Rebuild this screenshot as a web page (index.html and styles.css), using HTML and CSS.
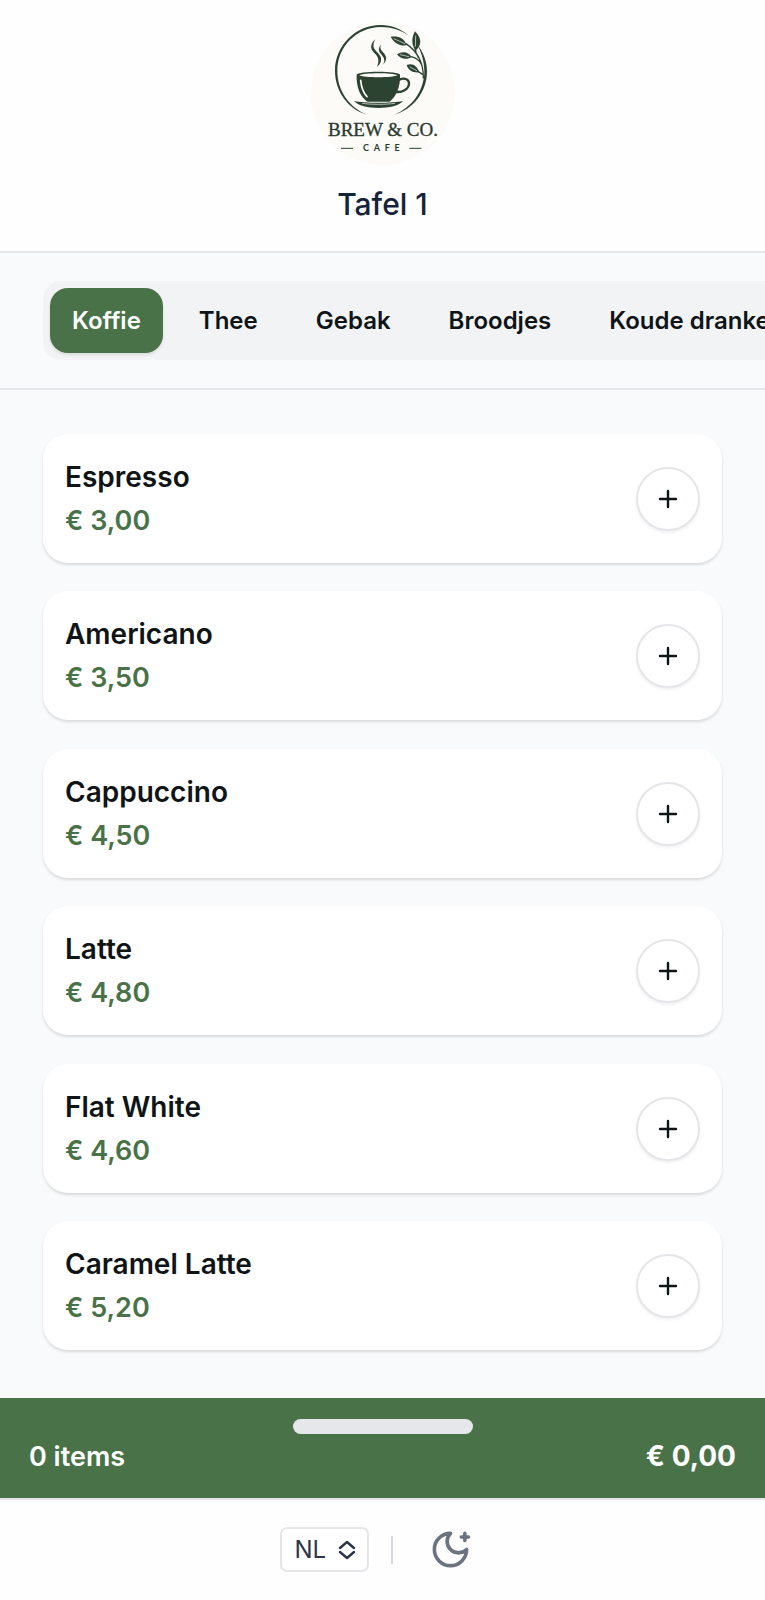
FILE: index.html
```html
<!DOCTYPE html>
<html lang="nl">
<head>
<meta charset="utf-8">
<meta name="viewport" content="width=device-width, initial-scale=1">
<title>Brew &amp; Co. – Tafel 1</title>
<link rel="stylesheet" href="styles.css">
</head>
<body>
<div class="page">
  <header class="header">
    <svg class="logo" viewBox="33 33 432 432" role="img" aria-label="Brew &amp; Co. Cafe">
      <circle cx="249" cy="249" r="216" fill="#fcfbf7"/>
      <g fill="#2b4330">
        <path d="M200 314C145 297 105 245 105 182C105 107 167 45 242 45C274 45 303 57 327 77C303 60 274 51 242 51C171 51 112 109 112 182C112 243 148 291 200 314Z"/>
        <path d="M353 105C370 127 381 155 381 184C381 247 338 299 283 314C334 294 373 244 373 184C373 156 365 130 353 105Z"/>
        <path d="M272 80C294 77 313 83 320 106C299 109 282 98 272 80Z"/>
        <path d="M345 64C367 87 365 107 346 122C334 102 334 85 345 64Z"/>
        <path d="M291 133C309 122 325 126 335 141C318 151 301 147 291 133Z"/>
        <path d="M320 165C338 158 351 167 358 187C339 189 325 182 320 165Z"/>
        <path d="M226 88C205 107 214 121 227 133C237 144 237 156 231 171C252 151 243 137 230 125C219 115 217 105 226 88Z"/>
        <path d="M243 103C232 118 237 127 247 137C255 146 254 155 249 164C264 149 259 137 249 127C241 119 239 113 243 103Z"/>
        <path fill-rule="evenodd" d="M170 194C172 182 298 182 300 194C302 235 286 261 269 275H202C183 261 168 235 170 194ZM178 196C190 204 280 204 292 196C280 188 190 188 178 196Z"/>
        <path d="M162 273C195 280 275 280 309 273C289 300 184 301 162 273Z"/>
      </g>
      <g fill="none" stroke="#2b4330" stroke-linecap="round">
        <path stroke-width="7" d="M298 209C315 202 328 208 327 222C326 237 308 247 291 246"/>
        <path stroke-width="4" d="M318 101C350 123 371 153 370 204M346 116C346 126 350 134 355 142M332 140C348 143 359 151 365 164M354 184L369 194"/>
        <path stroke-width="3" d="M124 415H158M329 415H363"/>
      </g>
      <g fill="none" stroke="#fcfbf7" stroke-linecap="round">
        <path stroke-width="5" d="M182 211C184 233 190 248 201 260"/>
        <path stroke-width="2" d="M282 86L314 101M347 78L346 109M301 134L326 140M330 171L350 182M188 280C210 284 260 284 284 280"/>
      </g>
      <text class="logo-name" x="249" y="379">BREW &amp; CO.</text>
      <text class="logo-sub" x="251" y="424">CAFE</text>
    </svg>
    <h1 class="table-name">Tafel 1</h1>
  </header>

  <nav class="categories" aria-label="Categorieën">
    <div class="tabs" role="tablist">
      <button class="tab tab-active" type="button" role="tab" aria-selected="true">Koffie</button>
      <button class="tab" type="button" role="tab" aria-selected="false">Thee</button>
      <button class="tab" type="button" role="tab" aria-selected="false">Gebak</button>
      <button class="tab" type="button" role="tab" aria-selected="false">Broodjes</button>
      <button class="tab" type="button" role="tab" aria-selected="false">Koude dranken</button>
    </div>
  </nav>

  <main class="menu">
    <article class="card">
      <div><h2 class="name">Espresso</h2><p class="price">€ 3,00</p></div>
      <button class="add" type="button" aria-label="Espresso toevoegen"><svg class="plus" viewBox="0 0 20 20"><path d="M10 2V18M2 10H18"/></svg></button>
    </article>
    <article class="card">
      <div><h2 class="name">Americano</h2><p class="price">€ 3,50</p></div>
      <button class="add" type="button" aria-label="Americano toevoegen"><svg class="plus" viewBox="0 0 20 20"><path d="M10 2V18M2 10H18"/></svg></button>
    </article>
    <article class="card">
      <div><h2 class="name">Cappuccino</h2><p class="price">€ 4,50</p></div>
      <button class="add" type="button" aria-label="Cappuccino toevoegen"><svg class="plus" viewBox="0 0 20 20"><path d="M10 2V18M2 10H18"/></svg></button>
    </article>
    <article class="card">
      <div><h2 class="name">Latte</h2><p class="price">€ 4,80</p></div>
      <button class="add" type="button" aria-label="Latte toevoegen"><svg class="plus" viewBox="0 0 20 20"><path d="M10 2V18M2 10H18"/></svg></button>
    </article>
    <article class="card">
      <div><h2 class="name">Flat White</h2><p class="price">€ 4,60</p></div>
      <button class="add" type="button" aria-label="Flat White toevoegen"><svg class="plus" viewBox="0 0 20 20"><path d="M10 2V18M2 10H18"/></svg></button>
    </article>
    <article class="card">
      <div><h2 class="name">Caramel Latte</h2><p class="price">€ 5,20</p></div>
      <button class="add" type="button" aria-label="Caramel Latte toevoegen"><svg class="plus" viewBox="0 0 20 20"><path d="M10 2V18M2 10H18"/></svg></button>
    </article>
  </main>

  <section class="cart" aria-label="Winkelwagen">
    <div class="handle"></div>
    <div class="cart-row">
      <span class="cart-count">0 items</span>
      <span class="cart-total">€ 0,00</span>
    </div>
  </section>

  <footer class="footer">
    <div class="language">
      <select class="language-select" aria-label="Taal"><option>NL</option><option>EN</option></select>
      <svg class="language-icon" viewBox="0 0 18 20" aria-hidden="true"><path d="M2 8L9 2L16 8M2 12L9 18L16 12"/></svg>
    </div>
    <span class="divider"></span>
    <button class="theme" type="button" aria-label="Donker thema">
      <svg class="moon" viewBox="0 0 24 24"><path d="M12 3a6 6 0 0 0 9 9 9 9 0 1 1-9-9M20 3v4M22 5h-4"/></svg>
    </button>
  </footer>
</div>
</body>
</html>
```
FILE: styles.css
```css
* {
  box-sizing: border-box;
}

body {
  margin: 0;
  font-family: Inter, "Liberation Sans", sans-serif;
  color: #0f1416;
  background: #f9fafc;
}

button,
select {
  font: inherit;
  color: inherit;
}

h1, h2, p {
  margin: 0;
}

.page {
  display: flex;
  flex-direction: column;
  min-height: 100vh;
}

.header {
  display: flex;
  flex-direction: column;
  align-items: center;
  gap: 19px;
  padding: 21px 28px 27px;
  background: #fefefe;
  border-bottom: 2px solid #e5e6e9;
}

.logo {
  width: 144px;
  height: 144px;
}

.logo-name {
  font: 57px "Liberation Serif", serif;
  fill: #2b3a30;
  stroke: #2b3a30;
  stroke-width: 1px;
  text-anchor: middle;
}

.logo-sub {
  font: 700 27px Lato, sans-serif;
  letter-spacing: 14px;
  fill: #2b3a30;
  text-anchor: middle;
}

.table-name {
  font-size: 30px;
  font-weight: 500;
  line-height: 40px;
  color: #14233a;
}

.categories {
  padding: 28px 0 28px 43px;
  overflow-x: auto;
  scrollbar-width: none;
  border-bottom: 2px solid #e5e6e9;
}

.tabs {
  display: flex;
  gap: 14px;
  width: max-content;
  padding: 7px;
  background: #f2f3f5;
  border-radius: 18px;
}

.tab {
  padding: 1px 22px 0;
  font-size: 24px;
  font-weight: 600;
  line-height: 64px;
  white-space: nowrap;
  background: none;
  border: 0;
  border-radius: 18px;
}

.tab-active {
  color: #fff;
  background: #4a7248;
  box-shadow: 0 2px 3px rgba(0, 0, 0, 0.1);
}

.menu {
  display: flex;
  flex: 1;
  flex-direction: column;
  justify-content: space-between;
  gap: 28px;
  padding: 44px 43px 48px;
}

.card {
  display: flex;
  align-items: center;
  justify-content: space-between;
  padding: 22px 22px 21px;
  background: #fff;
  border-radius: 25px;
  box-shadow: 0 2px 3px rgba(0, 0, 0, 0.13);
}

.name,
.price {
  font-weight: 600;
  line-height: 43px;
}

.name {
  font-size: 28px;
}

.price {
  font-size: 27px;
  color: #4a7248;
}

.add {
  display: grid;
  place-items: center;
  width: 64px;
  height: 64px;
  padding: 0;
  background: #fff;
  border: 2px solid #e5e6e9;
  border-radius: 50%;
  box-shadow: 0 2px 3px rgba(0, 0, 0, 0.06);
}

.plus {
  width: 20px;
  height: 20px;
  fill: none;
  stroke: #0f1416;
  stroke-width: 2.4;
  stroke-linecap: round;
}

.cart {
  padding: 21px 29px 19px;
  color: #fff;
  background: #4a7248;
}

.handle {
  width: 180px;
  height: 15px;
  margin: 0 auto;
  background: #e5e7ea;
  border-radius: 8px;
}

.cart-row {
  display: flex;
  justify-content: space-between;
  line-height: 45px;
}

.cart-count {
  font-size: 27px;
  font-weight: 600;
}

.cart-total {
  font-size: 28px;
  font-weight: 700;
}

.footer {
  display: flex;
  align-items: center;
  justify-content: center;
  gap: 22px;
  padding: 14px 28px 15px;
  background: #fefefe;
  border-top: 2px solid #e5e6e9;
}

.language {
  display: grid;
  align-items: center;
}

.language-select {
  grid-area: 1 / 1;
  width: 89px;
  height: 45px;
  padding: 0 13px;
  font-size: 24px;
  color: #2d3646;
  appearance: none;
  background: #fff;
  border: 2px solid #e5e6e9;
  border-radius: 7px;
}

.language-icon {
  grid-area: 1 / 1;
  justify-self: end;
  width: 18px;
  height: 20px;
  margin-right: 13px;
  fill: none;
  stroke: #2d3646;
  stroke-width: 2.4;
  stroke-linecap: round;
  stroke-linejoin: round;
  pointer-events: none;
}

.divider {
  width: 2px;
  height: 28px;
  background: #d6d9de;
}

.theme {
  display: grid;
  padding: 14px;
  color: #6b7280;
  background: none;
  border: 0;
}

.moon {
  width: 43px;
  height: 43px;
  fill: none;
  stroke: currentColor;
  stroke-width: 2;
  stroke-linecap: round;
  stroke-linejoin: round;
}
```
